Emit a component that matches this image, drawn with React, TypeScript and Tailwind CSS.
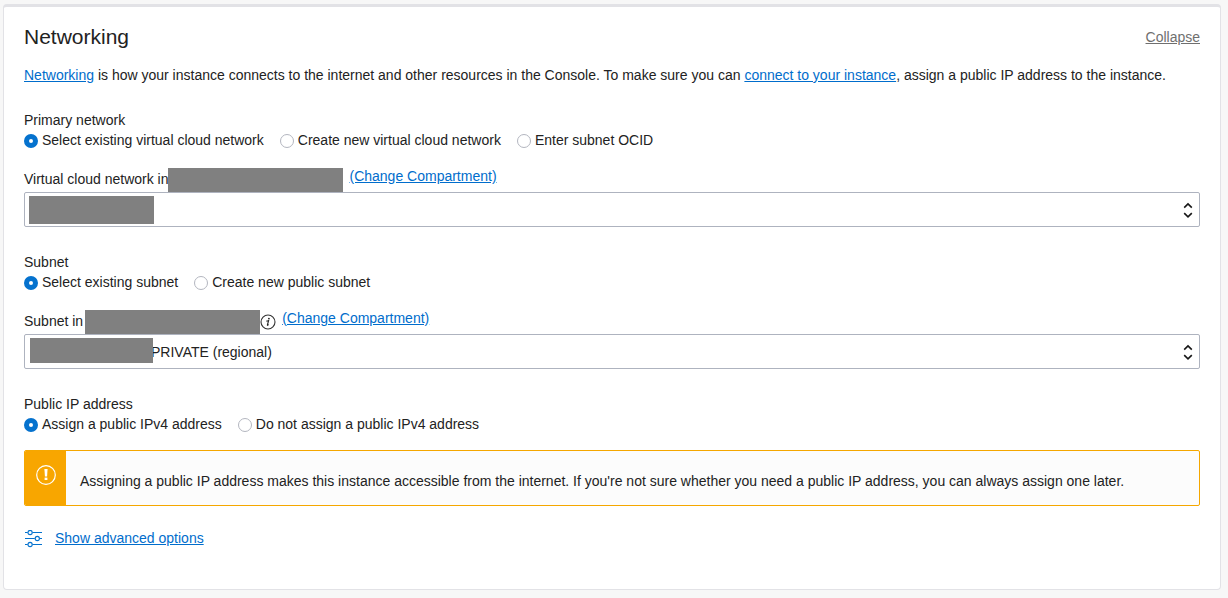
import { ReactNode } from "react";

const linkClass = "text-[#006dcc] underline underline-offset-1";

function Redacted({ className }: { className: string }) {
  return <span aria-hidden="true" className={`block bg-[#808080] ${className}`} />;
}

function RadioOption({
  name,
  label,
  defaultChecked = false,
}: {
  name: string;
  label: string;
  defaultChecked?: boolean;
}) {
  return (
    <label className="flex items-center gap-1">
      <input
        type="radio"
        name={name}
        defaultChecked={defaultChecked}
        className="mt-0.5 size-3.5 shrink-0 appearance-none rounded-full border border-[#b3b6bf] bg-white checked:border-5 checked:border-[#0572ce]"
      />
      {label}
    </label>
  );
}

function RadioSection({
  title,
  name,
  options,
}: {
  title: string;
  name: string;
  options: string[];
}) {
  return (
    <fieldset>
      <legend>{title}</legend>
      <div className="flex flex-wrap gap-x-4">
        {options.map((option, i) => (
          <RadioOption key={option} name={name} label={option} defaultChecked={i === 0} />
        ))}
      </div>
    </fieldset>
  );
}

function SelectBox({ id, value, mask }: { id: string; value: string; mask: ReactNode }) {
  return (
    <div className="relative">
      <select
        id={id}
        className="block h-[35px] w-full appearance-none rounded-xs border border-[#aeb3bf] bg-white pr-8 pl-[126px] text-[#222]"
      >
        <option>{value}</option>
      </select>
      {mask}
      <svg
        aria-hidden="true"
        viewBox="0 0 10 16"
        className="pointer-events-none absolute top-[10px] right-[7px] h-4 w-[10px]"
        fill="none"
        stroke="#161616"
        strokeWidth="1.6"
      >
        <path d="M1.2 5.6 5 1.9l3.8 3.7M1.2 11.1 5 14.8l3.8-3.7" />
      </svg>
    </div>
  );
}

function InfoIcon() {
  return (
    <svg aria-hidden="true" viewBox="0 0 16 16" className="size-4" fill="none">
      <circle cx="8" cy="8" r="7" stroke="#333" strokeWidth="1.1" />
      <circle cx="8.9" cy="4.6" r="0.9" fill="#222" />
      <path
        d="M6.4 7.1c.9-.1 1.5-.3 2.2-.5L7.4 11c-.1.5.3.5 1.2-.5"
        stroke="#222"
        strokeWidth="1.1"
      />
    </svg>
  );
}

function SlidersIcon() {
  return (
    <svg
      aria-hidden="true"
      viewBox="0 0 18 18"
      className="mt-0.5 size-[18px]"
      fill="none"
      stroke="#0572ce"
      strokeWidth="1.1"
    >
      <path d="M0 2.5h2.7M7.4 2.5h9.6M0 8.5h9.8M14.6 8.5h2.4M0 14.5h2.7M7.4 14.5h9.6" />
      <circle cx="5.1" cy="2.5" r="2.1" />
      <circle cx="12.3" cy="8.5" r="2.1" />
      <circle cx="5.1" cy="14.5" r="2.1" />
    </svg>
  );
}

export default function App() {
  return (
    <div className="min-h-screen bg-[#f7f7f7] pt-1 pr-[7px] pb-2 pl-[3px] font-['Liberation_Sans',Arial,sans-serif] text-sm text-[#222]">
      <section className="rounded-sm border border-t-3 border-[#e2e2e6] bg-white px-5 pt-4 pb-[41px]">
        <header className="flex items-center justify-between">
          <h1 className="text-[21px] leading-7">Networking</h1>
          <a href="#collapse" className="text-[#6f6f6f] underline underline-offset-1">
            Collapse
          </a>
        </header>

        <p className="mt-3.5">
          <a href="#networking" className={linkClass}>Networking</a> is how your instance connects to
          the internet and other resources in the Console. To make sure you can{" "}
          <a href="#connect" className={linkClass}>connect to your instance</a>, assign a public IP
          address to the instance.
        </p>

        <div className="mt-[25px] flex flex-col gap-[25px]">
          <div>
            <RadioSection
              title="Primary network"
              name="vcn"
              options={[
                "Select existing virtual cloud network",
                "Create new virtual cloud network",
                "Enter subnet OCID",
              ]}
            />
            <div className="mt-[18px] flex h-6">
              <label htmlFor="vcn-select" className="leading-[22px]">
                Virtual cloud network in
              </label>
              <Redacted className="h-6 w-[175px]" />
              <a href="#vcn-compartment" className={`ml-1.5 leading-4 ${linkClass}`}>
                (Change Compartment)
              </a>
            </div>
            <SelectBox
              id="vcn-select"
              value=""
              mask={<Redacted className="absolute top-1 left-[5px] h-7 w-[125px]" />}
            />
          </div>

          <div>
            <RadioSection
              title="Subnet"
              name="subnet"
              options={["Select existing subnet", "Create new public subnet"]}
            />
            <div className="mt-[18px] flex h-6">
              <label htmlFor="subnet-select" className="leading-[22px]">
                Subnet in
              </label>
              <Redacted className="ml-0.5 h-6 w-[175px]" />
              <span className="pt-1">
                <InfoIcon />
              </span>
              <a href="#subnet-compartment" className={`ml-1.5 leading-4 ${linkClass}`}>
                (Change Compartment)
              </a>
            </div>
            <SelectBox
              id="subnet-select"
              value="PRIVATE (regional)"
              mask={<Redacted className="absolute top-1 left-1.5 h-[25px] w-[123px]" />}
            />
          </div>

          <RadioSection
            title="Public IP address"
            name="public-ip"
            options={["Assign a public IPv4 address", "Do not assign a public IPv4 address"]}
          />
        </div>

        <div
          role="note"
          className="mt-4 flex min-h-14 overflow-hidden rounded-xs border border-[#f5a700] bg-[#fcfcfc]"
        >
          <div className="w-[41px] shrink-0 bg-[#f8a600] pt-3.5 pl-[11px]">
            <svg aria-hidden="true" viewBox="0 0 20 20" className="size-5" fill="none">
              <circle cx="10" cy="10" r="9.3" stroke="#fff" strokeWidth="1.2" />
              <path d="M8.4 4h3.2l-.5 7.5H8.9z" fill="#fff" />
              <rect x="8.6" y="12.6" width="2.8" height="2.4" fill="#fff" />
            </svg>
          </div>
          <p className="px-3.5 pt-5 pb-3.5">
            Assigning a public IP address makes this instance accessible from the internet. If you're
            not sure whether you need a public IP address, you can always assign one later.
          </p>
        </div>

        <div className="mt-[22px] flex items-center gap-3 pl-px">
          <SlidersIcon />
          <a href="#advanced" className={linkClass}>Show advanced options</a>
        </div>
      </section>
    </div>
  );
}
